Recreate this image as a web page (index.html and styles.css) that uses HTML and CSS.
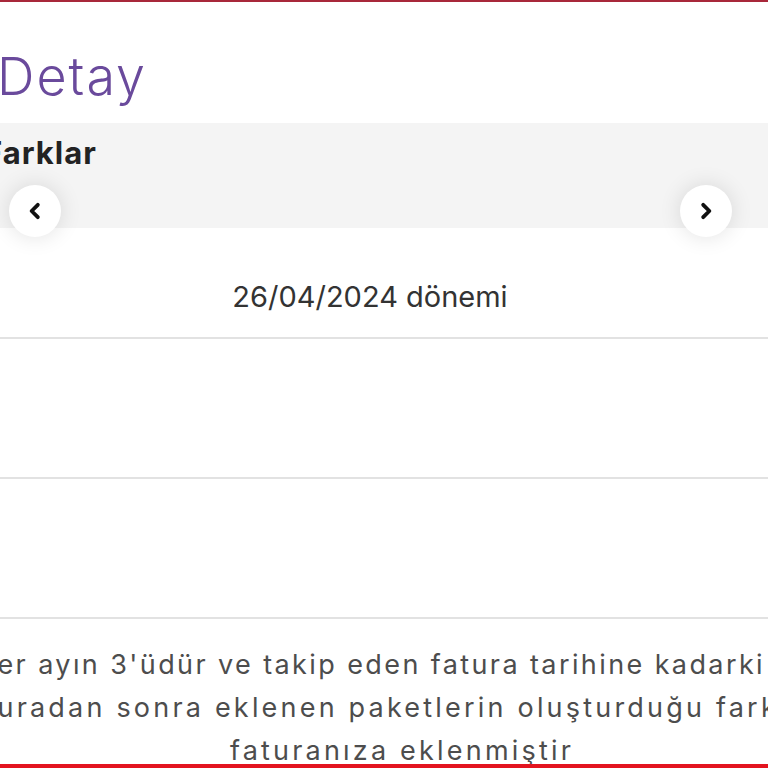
FILE: index.html
```html
<!DOCTYPE html>
<html lang="tr">
<head>
    <meta charset="UTF-8">
    <meta name="viewport" content="width=device-width, initial-scale=1.0">
    <title>Detay</title>
    <link rel="stylesheet" href="styles.css">
</head>
<body>
    <div class="screen">
        <h1 class="page-title">Detay</h1>

        <section class="carousel">
            <div class="carousel-head">
                <h2>Farklar</h2>
            </div>
            <button class="nav-btn prev" aria-label="Önceki">
                <svg viewBox="0 0 16 16" width="18" height="18"><polyline points="10.5,2.5 5,8 10.5,13.5"/></svg>
            </button>
            <button class="nav-btn next" aria-label="Sonraki">
                <svg viewBox="0 0 16 16" width="18" height="18"><polyline points="5.5,2.5 11,8 5.5,13.5"/></svg>
            </button>

            <div class="period">26/04/2024 dönemi</div>
            <div class="row"></div>
            <div class="row"></div>
        </section>

        <div class="note">
            <div class="note-line">Fatura dönemi her ayın 3'üdür ve takip eden fatura tarihine kadarki süresini kapsar ve</div>
            <div class="note-line wide">faturadan sonra eklenen paketlerin oluşturduğu farkların</div>
            <div class="note-line wide">faturanıza eklenmiştir</div>
        </div>
    </div>
</body>
</html>
```

FILE: styles.css
```css
body {
    margin: 0;
    background: #fff;
    font-family: Inter, "Noto Sans", sans-serif;
    overflow: hidden;
}

.screen {
    height: 768px;
    box-sizing: border-box;
    border-top: 2px solid #a8283a;
    border-bottom: 4px solid #e3141f;
    overflow: hidden;
}

.page-title {
    margin: 49px 0 20px -3px;
    font-size: 52px;
    line-height: 1;
    font-weight: 300;
    letter-spacing: 2px;
    color: #6a4a9c;
}

.carousel {
    position: relative;
}

.carousel-head {
    height: 105px;
    box-sizing: border-box;
    padding-top: 14px;
    background: #f4f4f4;
}

.carousel-head h2 {
    margin: 0 0 0 -16px;
    font-size: 31px;
    line-height: 1;
    font-weight: 700;
    letter-spacing: 1px;
    color: #222;
}

.nav-btn {
    position: absolute;
    top: 62px;
    width: 52px;
    height: 52px;
    padding: 0;
    border: none;
    border-radius: 50%;
    background: #fff;
    box-shadow: 0 0 22px rgba(0, 0, 0, 0.12);
    display: flex;
    align-items: center;
    justify-content: center;
    cursor: pointer;
}

.nav-btn svg {
    fill: none;
    stroke: #111;
    stroke-width: 3.4;
    stroke-linecap: round;
    stroke-linejoin: round;
}

.nav-btn.prev {
    left: 9px;
}

.nav-btn.next {
    right: 36px;
}

.period {
    padding: 54px 28px 26px 0;
    font-size: 29px;
    line-height: 1;
    text-align: center;
    color: #333;
    border-bottom: 2px solid #e2e2e2;
}

.row {
    height: 138px;
    border-bottom: 2px solid #e2e2e2;
}

/* wide box so the long lines stay centred */
.note {
    margin: 0 -436px 0 -400px;
    padding-top: 24px;
    font-size: 27px;
    line-height: 43px;
    letter-spacing: 2.4px;
    color: #4d4d4d;
    text-align: center;
    white-space: nowrap;
}

.note-line.wide {
    letter-spacing: 3.2px;
}
```
